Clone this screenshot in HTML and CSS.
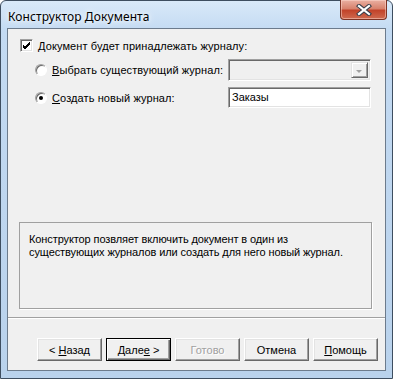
FILE: index.html
```html
<!DOCTYPE html>
<html lang="ru">
<head>
    <meta charset="UTF-8">
    <title>Конструктор Документа</title>
    <link rel="stylesheet" href="styles.css">
</head>
<body>

<div class="window">
    <div class="titlebar">
        <span class="title">Конструктор Документа</span>
        <div class="close">
            <svg width="16" height="12" viewBox="0 0 16 12">
                <path d="M3 2 L13 10 M13 2 L3 10" stroke="#3b3f4a" stroke-width="4.2" stroke-linecap="square"/>
                <path d="M3 2 L13 10 M13 2 L3 10" stroke="#fff" stroke-width="2.2" stroke-linecap="square"/>
            </svg>
        </div>
    </div>

    <div class="client">
        <!-- journal options -->
        <div class="row check-row">
            <span class="checkbox">
                <svg width="9" height="9" viewBox="0 0 9 9"><path d="M1 4 L3 6 L8 1 M1 5 L3 7 L8 2 M1 6 L3 8 L8 3" stroke="#000" stroke-width="1" fill="none"/></svg>
            </span>
            <span class="label"><u>Д</u>окумент будет принадлежать журналу:</span>
        </div>

        <div class="row radio-row first">
            <span class="radio"></span>
            <span class="label radio-label"><u>В</u>ыбрать существующий журнал:</span>
            <div class="combo">
                <span class="combo-btn"></span>
            </div>
        </div>

        <div class="row radio-row second">
            <span class="radio checked"></span>
            <span class="label radio-label"><u>С</u>оздать новый журнал:</span>
            <div class="field">Заказы</div>
        </div>

        <!-- description -->
        <div class="info">
            Конструктор позвляет включить документ в один из<br>
            существующих журналов или создать для него новый журнал.
        </div>

        <div class="separator"></div>

        <div class="buttons">
            <button class="btn">&lt; <u>Н</u>азад</button>
            <button class="btn btn-default">Дале<u>е</u> &gt;</button>
            <button class="btn btn-disabled">Готово</button>
            <button class="btn">Отмена</button>
            <button class="btn"><u>П</u>омощь</button>
        </div>
    </div>
</div>

</body>
</html>
```

FILE: styles.css
```css
body {
    margin: 0;
    padding: 0;
    background-color: #ffffff;
}

.window {
    width: 393px;
    height: 379px;
    box-sizing: border-box;
    border: 1px solid #3e4e60;
    border-radius: 6px 6px 0 0;
    background: linear-gradient(180deg, #d9e9f9 0px, #c3daf2 30px, #b9d2ec 100%);
    display: flex;
    flex-direction: column;
}

.titlebar {
    height: 28px;
    display: flex;
    align-items: flex-start;
}

.title {
    font-family: "Noto Sans", "Open Sans", sans-serif;
    font-size: 12px;
    color: #000;
    margin-left: 7px;
    margin-top: 7px;
    letter-spacing: 0.1px;
    text-shadow: 0 0 8px #ffffff, 0 0 4px #ffffff;
}

.close {
    margin-left: auto;
    margin-right: 5px;
    margin-top: -1px;
    width: 47px;
    height: 20px;
    box-sizing: border-box;
    border: 1px solid #7d3325;
    border-top: none;
    border-radius: 0 0 4px 4px;
    background: linear-gradient(180deg, #eab0a2 0%, #d8826d 45%, #c2432a 55%, #cf6a4f 100%);
    box-shadow: inset 0 0 0 1px rgba(255, 220, 210, 0.5);
    display: flex;
    align-items: center;
    justify-content: center;
}

.client {
    margin: 0 6px 7px 6px;
    flex: 1;
    border: 1px solid #6c7b8c;
    background-color: #f0f0f0;
    display: flex;
    flex-direction: column;
    padding: 10px 0 9px 0;
    font-family: "Liberation Sans", Arial, sans-serif;
    font-size: 11px;
    color: #000;
}

.row {
    display: flex;
    align-items: center;
}

.check-row {
    height: 13px;
    padding-left: 12px;
}

.checkbox {
    width: 13px;
    height: 13px;
    box-sizing: border-box;
    border: 1px solid;
    border-color: #a0a0a0 #ffffff #ffffff #a0a0a0;
    box-shadow: inset 1px 1px 0 #696969, inset -1px -1px 0 #e3e3e3;
    background-color: #fff;
    display: flex;
    align-items: center;
    justify-content: center;
}

.label {
    margin-left: 5px;
    letter-spacing: 0.1px;
    white-space: nowrap;
}

.radio-row {
    padding-left: 27px;
}

.radio-row.first {
    margin-top: 7px;
    height: 22px;
}

.radio-row.second {
    margin-top: 6px;
    height: 21px;
}

.radio {
    width: 12px;
    height: 12px;
    flex-shrink: 0;
    box-sizing: border-box;
    border-radius: 50%;
    border: 1px solid;
    border-color: #a0a0a0 #ffffff #ffffff #a0a0a0;
    background-color: #fff;
    box-shadow: inset 1px 1px 0 #696969;
    position: relative;
}

.radio.checked::after {
    content: "";
    position: absolute;
    left: 3px;
    top: 3px;
    width: 4px;
    height: 4px;
    border-radius: 50%;
    background-color: #000;
}

.radio-label {
    width: 176px;
    flex-shrink: 0;
    margin-left: 5px;
}

.combo, .field {
    width: 143px;
    flex-shrink: 0;
    box-sizing: border-box;
    border: 1px solid;
    border-color: #a0a0a0 #ffffff #ffffff #a0a0a0;
    box-shadow: inset 1px 1px 0 #696969, inset -1px -1px 0 #e3e3e3;
}

.combo {
    height: 22px;
    background-color: #f0f0f0;
    display: flex;
    justify-content: flex-end;
    padding: 2px;
}

.combo-btn {
    width: 17px;
    box-sizing: border-box;
    border: 1px solid;
    border-color: #e3e3e3 #696969 #696969 #e3e3e3;
    box-shadow: inset 1px 1px 0 #ffffff, inset -1px -1px 0 #a0a0a0;
    background-color: #f0f0f0;
    position: relative;
}

.combo-btn::after {
    content: "";
    position: absolute;
    left: 4px;
    top: 7px;
    border-left: 3px solid transparent;
    border-right: 3px solid transparent;
    border-top: 3px solid #a0a0a0;
}

.field {
    height: 21px;
    background-color: #fff;
    padding: 3px 0 0 3px;
    line-height: 13px;
}

.info {
    margin: 114px 0 0 11px;
    width: 353px;
    height: 87px;
    box-sizing: border-box;
    border: 1px solid #a0a0a0;
    box-shadow: 1px 1px 0 #ffffff;
    padding: 10px 0 0 9px;
    line-height: 13px;
    letter-spacing: -0.1px;
}

.separator {
    margin-top: 8px;
    height: 1px;
    background-color: #a0a0a0;
    border-bottom: 1px solid #ffffff;
}

.buttons {
    margin-top: 19px;
    padding-left: 29px;
    display: flex;
    gap: 4px;
}

.btn {
    width: 65px;
    height: 23px;
    box-sizing: border-box;
    border: 1px solid;
    border-color: #ffffff #696969 #696969 #ffffff;
    box-shadow: inset -1px -1px 0 #a0a0a0, inset 1px 1px 0 #e3e3e3;
    background-color: #f0f0f0;
    font-family: "Liberation Sans", Arial, sans-serif;
    font-size: 11px;
    color: #000;
    padding: 0;
    margin: 0;
}

.btn-default {
    border: 1px solid #000;
    box-shadow: inset 1px 1px 0 #ffffff, inset -1px -1px 0 #696969, inset -2px -2px 0 #a0a0a0;
}

.btn-disabled {
    color: #a0a0a0;
    text-shadow: 1px 1px 0 #ffffff;
}
```
